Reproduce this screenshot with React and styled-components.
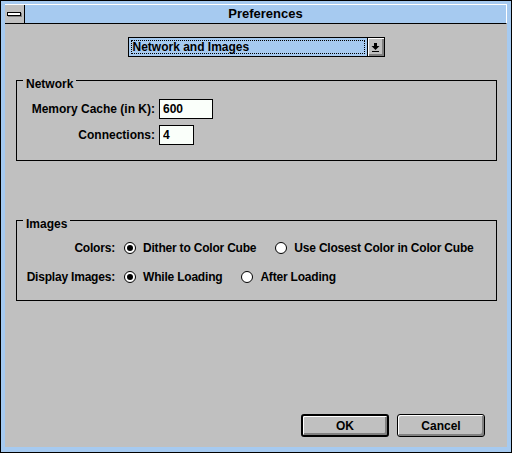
import React, { useState } from 'react';
import styled, { createGlobalStyle } from 'styled-components';

const GlobalStyle = createGlobalStyle`
  * { box-sizing: border-box; }
  html, body { margin: 0; padding: 0; background: #c0c0c0; }
  body {
    font-family: "Liberation Sans", Arial, sans-serif;
    font-size: 12px;
    font-weight: bold;
    color: #000;
  }
`;

const Window = styled.div`
  width: 512px;
  height: 453px;
  border: 1px solid #000;
  background: #a6caf0;
  padding: 3px 4px 5px 4px;
  display: flex;
  flex-direction: column;
`;

const TitleBar = styled.div`
  display: flex;
  height: 20px;
  border-top: 1px solid #fff;
  border-right: 1px solid #fff;
  border-bottom: 1px solid #000;
`;

const SystemBox = styled.div`
  width: 20px;
  background: #c0c0c0;
  border-right: 1px solid #000;
  display: flex;
  align-items: center;
  justify-content: center;
`;

const SystemBar = styled.div`
  width: 14px;
  height: 4px;
  margin-right: 1px;
  background: #fff;
  border: 1px solid #000;
  box-shadow: 1px 1px 0 #808080;
`;

const Title = styled.div`
  flex: 1;
  text-align: center;
  line-height: 18px;
  font-size: 13px;
`;

const Client = styled.div`
  flex: 1;
  background: #c0c0c0;
  display: flex;
  flex-direction: column;
`;

const Combo = styled.div`
  align-self: center;
  margin-top: 13px;
  width: 257px;
  height: 20px;
  border: 1px solid #000;
  background: #a6caf0;
  display: flex;
`;

const ComboText = styled.div`
  flex: 1;
  margin: 2px;
  border: 1px dotted #000;
  padding-left: 1px;
  line-height: 12px;
`;

const ComboButton = styled.div`
  width: 17px;
  border-left: 1px solid #000;
  background: #c0c0c0;
  box-shadow: inset 1px 1px 0 #fff, inset -2px -2px 0 #808080;
  display: flex;
  align-items: center;
  justify-content: center;
`;

const Group = styled.fieldset`
  margin: ${(p) => p.$top}px 0 0 11px;
  width: 481px;
  min-width: 0;
  border: 1px solid #000;
  padding: ${(p) => p.$pad};
`;

/* the extra top padding drops the caption so it hangs just under the frame line */
const Legend = styled.legend`
  margin-left: 6px;
  padding: 8px 3px 0 3px;
  line-height: 14px;
`;

const FormGrid = styled.div`
  display: grid;
  grid-template-columns: ${(p) => p.$label}px auto;
  column-gap: ${(p) => p.$gap}px;
  row-gap: ${(p) => p.$rowGap}px;
  align-items: center;
  justify-items: start;
  letter-spacing: ${(p) => (p.$tight ? '-0.2px' : 'normal')};
`;

const Label = styled.label`
  justify-self: end;
  white-space: nowrap;
`;

const Field = styled.input`
  width: ${(p) => p.$w}px;
  height: 20px;
  border: 1px solid #000;
  background: #fafffa;
  padding: 0 0 0 3px;
  margin: 0;
  font: inherit;
  color: #000;
  outline: none;
`;

const Options = styled.div`
  display: flex;
  align-items: center;
  gap: 19px;
  height: 20px;
`;

const Option = styled.label`
  display: flex;
  align-items: center;
  gap: 7px;
  white-space: nowrap;
  cursor: default;
`;

const RadioCircle = styled.span`
  width: 12px;
  height: 12px;
  border-radius: 50%;
  border: 1px solid #000;
  background: #fff;
  display: flex;
  align-items: center;
  justify-content: center;

  &::after {
    content: '';
    width: 6px;
    height: 6px;
    border-radius: 50%;
    background: ${(p) => (p.$on ? '#000' : 'transparent')};
  }
`;

const ButtonRow = styled.div`
  margin-top: auto;
  display: flex;
  justify-content: flex-end;
  gap: 8px;
  padding: 0 22px 10px 0;
`;

const Button = styled.button`
  width: 88px;
  height: 23px;
  margin: 0;
  padding: 0;
  border: ${(p) => (p.$default ? 2 : 1)}px solid #000;
  border-radius: 3px;
  background: #c0c0c0;
  box-shadow: inset 1px 1px 0 #fff, inset -2px -2px 0 #808080;
  font: inherit;
  color: #000;
`;

function DownArrow() {
  return (
    <svg width="9" height="11" viewBox="0 0 9 11">
      <rect x="3" y="1" width="3" height="3" fill="#000" />
      <polygon points="0.5,4 8.5,4 4.5,8" fill="#000" />
      <rect x="1" y="9" width="7" height="1" fill="#000" />
    </svg>
  );
}

function Radio({ checked, label, onSelect }) {
  return (
    <Option onClick={onSelect}>
      <RadioCircle $on={checked} />
      {label}
    </Option>
  );
}

export default function App() {
  const [cache, setCache] = useState('600');
  const [connections, setConnections] = useState('4');
  const [dither, setDither] = useState(true);
  const [whileLoading, setWhileLoading] = useState(true);

  return (
    <Window>
      <GlobalStyle />
      <TitleBar>
        <SystemBox>
          <SystemBar />
        </SystemBox>
        <Title>Preferences</Title>
      </TitleBar>
      <Client>
        <Combo>
          <ComboText>Network and Images</ComboText>
          <ComboButton>
            <DownArrow />
          </ComboButton>
        </Combo>

        <Group $top={12} $pad="8px 0 15px 0">
          <Legend>Network</Legend>
          <FormGrid $label={138} $gap={4} $rowGap={6}>
            <Label>Memory Cache (in K):</Label>
            <Field $w={54} value={cache} onChange={(e) => setCache(e.target.value)} />
            <Label>Connections:</Label>
            <Field $w={35} value={connections} onChange={(e) => setConnections(e.target.value)} />
          </FormGrid>
        </Group>

        <Group $top={48} $pad="7px 0 13px 0">
          <Legend>Images</Legend>
          <FormGrid $label={98} $gap={9} $rowGap={9} $tight>
            <Label>Colors:</Label>
            <Options>
              <Radio checked={dither} label="Dither to Color Cube" onSelect={() => setDither(true)} />
              <Radio
                checked={!dither}
                label="Use Closest Color in Color Cube"
                onSelect={() => setDither(false)}
              />
            </Options>
            <Label>Display Images:</Label>
            <Options>
              <Radio checked={whileLoading} label="While Loading" onSelect={() => setWhileLoading(true)} />
              <Radio checked={!whileLoading} label="After Loading" onSelect={() => setWhileLoading(false)} />
            </Options>
          </FormGrid>
        </Group>

        <ButtonRow>
          <Button $default>OK</Button>
          <Button>Cancel</Button>
        </ButtonRow>
      </Client>
    </Window>
  );
}
